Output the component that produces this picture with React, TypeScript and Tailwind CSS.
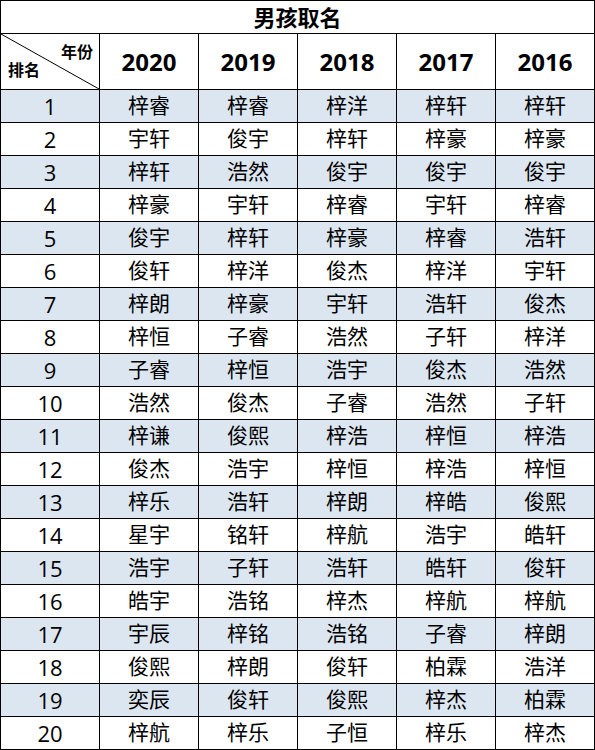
const years = ["2020", "2019", "2018", "2017", "2016"];

const rows: string[][] = [
  ["梓睿", "梓睿", "梓洋", "梓轩", "梓轩"],
  ["宇轩", "俊宇", "梓轩", "梓豪", "梓豪"],
  ["梓轩", "浩然", "俊宇", "俊宇", "俊宇"],
  ["梓豪", "宇轩", "梓睿", "宇轩", "梓睿"],
  ["俊宇", "梓轩", "梓豪", "梓睿", "浩轩"],
  ["俊轩", "梓洋", "俊杰", "梓洋", "宇轩"],
  ["梓朗", "梓豪", "宇轩", "浩轩", "俊杰"],
  ["梓恒", "子睿", "浩然", "子轩", "梓洋"],
  ["子睿", "梓恒", "浩宇", "俊杰", "浩然"],
  ["浩然", "俊杰", "子睿", "浩然", "子轩"],
  ["梓谦", "俊熙", "梓浩", "梓恒", "梓浩"],
  ["俊杰", "浩宇", "梓恒", "梓浩", "梓恒"],
  ["梓乐", "浩轩", "梓朗", "梓皓", "俊熙"],
  ["星宇", "铭轩", "梓航", "浩宇", "皓轩"],
  ["浩宇", "子轩", "浩轩", "皓轩", "俊轩"],
  ["皓宇", "浩铭", "梓杰", "梓航", "梓航"],
  ["宇辰", "梓铭", "浩铭", "子睿", "梓朗"],
  ["俊熙", "梓朗", "俊轩", "柏霖", "浩洋"],
  ["奕辰", "俊轩", "俊熙", "梓杰", "柏霖"],
  ["梓航", "梓乐", "子恒", "梓乐", "梓杰"],
];

const cell = "border-r border-b border-black flex items-center justify-center";

export default function App() {
  return (
    <div
      className="w-[595px] h-[750px] bg-white text-black"
      style={{ fontFamily: '"Open Sans", "Noto Sans CJK SC", sans-serif' }}
    >
      <div className="grid grid-cols-[99px_99px_99px_99px_99px_99px] border-l border-t border-black">
        <div className={`${cell} col-span-6 h-[33px] text-[22px] font-bold`}>男孩取名</div>

        {/* header */}
        <div className="relative h-[56px] border-r border-b border-black">
          <svg className="absolute inset-0" width="98" height="55" viewBox="0 0 98 55">
            <line x1="0" y1="0" x2="98" y2="55" stroke="black" strokeWidth="1" />
          </svg>
          <span className="absolute right-[6px] top-[10px] text-[16px] font-bold leading-none">年份</span>
          <span className="absolute left-[7px] bottom-[11px] text-[16px] font-bold leading-none">排名</span>
        </div>
        {years.map((y) => (
          <div key={y} className={`${cell} h-[56px] text-[24px] font-bold`}>
            {y}
          </div>
        ))}

        {rows.map((r, i) => {
          const bg = i % 2 === 0 ? "bg-[#dce6f1]" : "bg-white";
          return (
            <div key={i} className="contents">
              <div className={`${cell} ${bg} h-[33px] text-[22px]`}>{i + 1}</div>
              {r.map((n, j) => (
                <div key={j} className={`${cell} ${bg} h-[33px] text-[21px]`}>
                  {n}
                </div>
              ))}
            </div>
          );
        })}
      </div>
    </div>
  );
}
